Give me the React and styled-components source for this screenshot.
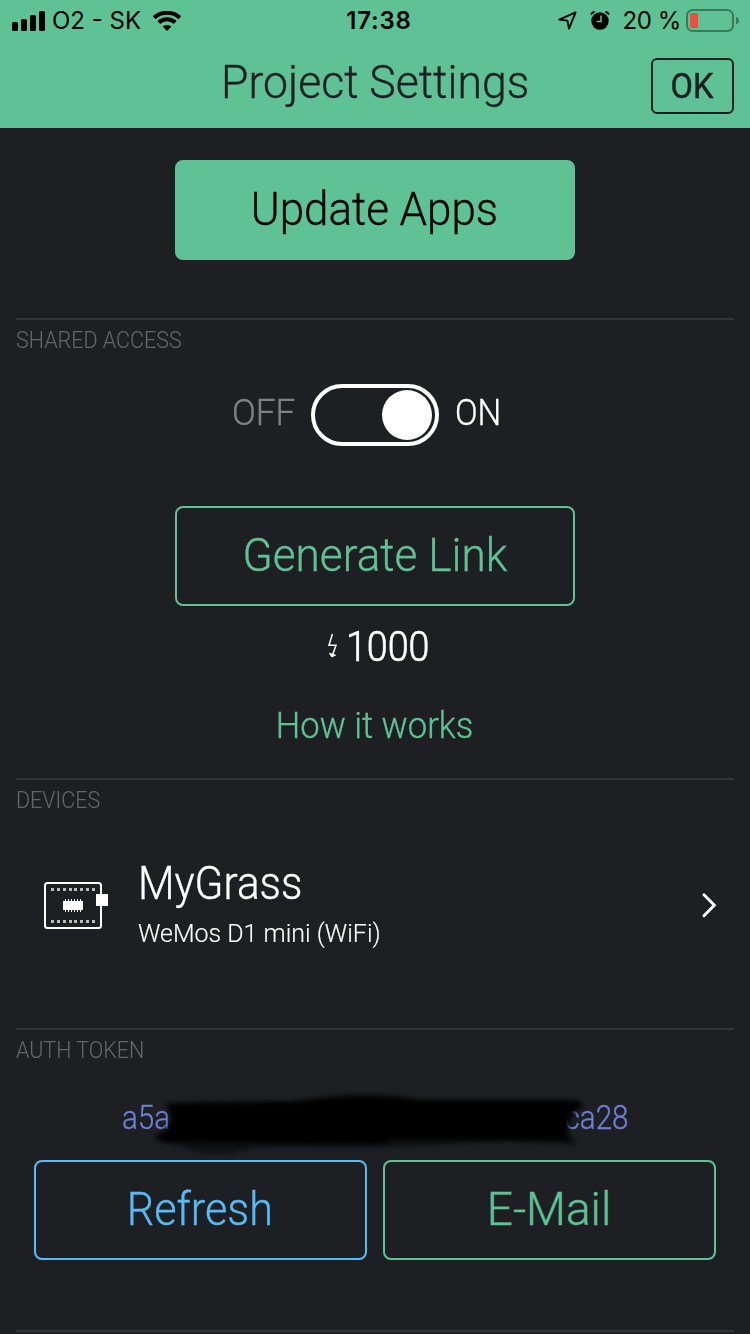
import React from 'react';
import styled, { createGlobalStyle } from 'styled-components';

const green = '#5fc294';
const dark = '#1e1f23';
const blue = '#56bcf6';

const GlobalStyle = createGlobalStyle`
  * { box-sizing: border-box; }
  body { margin: 0; background: ${dark}; }
  button { background: none; padding: 0; cursor: pointer; }
`;

const Screen = styled.div`
  width: 750px;
  height: 1334px;
  overflow: hidden;
  background: ${dark};
  color: #fff;
  font-family: Roboto, "Liberation Sans", sans-serif;
  font-weight: 300;
  display: flex;
  flex-direction: column;
`;

const Label = styled.span`
  display: block;
  white-space: nowrap;
  font-size: ${(p) => p.$size || 46}px;
  line-height: ${(p) => p.$line || 50}px;
  letter-spacing: ${(p) => p.$track || 0}px;
  color: ${(p) => p.$color || 'inherit'};
  transform: scaleX(${(p) => p.$squeeze || 1});
  transform-origin: ${(p) => p.$origin || 'center'};
  -webkit-text-stroke: ${(p) => (p.$stroke === undefined ? 0.35 : p.$stroke)}px currentColor;
`;

const Header = styled.header`
  height: 128px;
  flex: none;
  background: ${green};
  color: ${dark};
`;

const StatusBar = styled.div`
  height: 41px;
  display: grid;
  grid-template-columns: 1fr auto 1fr;
  align-items: center;
  padding: 0 11px 0 12px;
  color: #000;
  font-family: Inter, "Liberation Sans", sans-serif;
  font-weight: 400;
`;

const StatusGroup = styled.div`
  display: flex;
  align-items: center;
  justify-content: ${(p) => (p.$end ? 'flex-end' : 'flex-start')};
  svg { display: block; flex: none; }
`;

const StatusText = styled(Label)`
  font-weight: ${(p) => p.$weight || 400};
  margin: ${(p) => p.$margin || 0};
  -webkit-text-stroke: 0;
`;

const TitleBar = styled.div`
  height: 87px;
  display: grid;
  grid-template-columns: 1fr auto 1fr;
  padding: 0 16px;
  align-items: start;
`;

const Title = styled.h1`
  margin: 16px 0 0;
  font-weight: 300;
`;

const OkButton = styled.button`
  justify-self: end;
  margin-top: 17px;
  width: 83px;
  height: 56px;
  border: 2px solid ${dark};
  border-radius: 6px;
  color: ${dark};
  font: 400 35px Roboto, sans-serif;
  display: flex;
  align-items: center;
  justify-content: center;
  padding-top: 2px;
`;

const Section = styled.section`
  height: ${(p) => p.$height}px;
  flex: none;
  margin: 0 16px;
  border-top: ${(p) => (p.$plain ? '0' : '2px solid #333438')};
  display: flex;
  flex-direction: column;
  align-items: center;
`;

const SectionName = styled(Label)`
  align-self: flex-start;
  margin-top: 8px;
  color: #646568;
  transform: scaleX(0.914);
  transform-origin: left;
`;

const BigButton = styled.button`
  width: ${(p) => p.$width || 400}px;
  height: 100px;
  flex: none;
  margin-top: ${(p) => p.$top || 0}px;
  border: 2px solid ${(p) => p.$tone};
  border-radius: 8px;
  color: ${(p) => (p.$filled ? '#000' : p.$tone)};
  background: ${(p) => (p.$filled ? p.$tone : 'transparent')};
  font: 300 46px Roboto, sans-serif;
  display: flex;
  justify-content: center;
  align-items: flex-start;
  padding: 22px 1px 0 0;
`;

const ToggleRow = styled.div`
  display: flex;
  align-items: center;
  justify-content: flex-start;
  gap: 16px;
  width: 288px;
  margin: 32px 0 0 1px;
`;

const Switch = styled.div`
  width: 128px;
  height: 62px;
  flex: none;
  border: 4px solid #fff;
  border-radius: 31px;
  padding: 2px 3px;
  display: flex;
  justify-content: flex-end;
`;

const Knob = styled.div`
  width: 50px;
  height: 50px;
  border-radius: 50%;
  background: #fff;
`;

const ToggleText = styled(Label)`
  margin-top: -5px;
  width: ${(p) => p.$width}px;
`;

const Price = styled.div`
  display: flex;
  align-items: center;
  gap: 8px;
  margin: 15px 0 0 19px;
`;

const Link = styled.a`
  color: ${green};
  margin-top: 30px;
`;

const DeviceRow = styled.div`
  align-self: stretch;
  display: flex;
  align-items: center;
  margin-top: 46px;
  padding: 0 17px 0 28px;
  svg { margin-bottom: 5px; flex: none; }
`;

const DeviceText = styled.div`
  flex: 1;
  margin-left: 29px;
`;

const Token = styled.div`
  position: relative;
  width: 506px;
  height: 44px;
  margin-top: 34px;
  display: flex;
  justify-content: space-between;
  color: #6b80d6;
`;

const Scribble = styled.svg`
  position: absolute;
  left: 18px;
  top: -8px;
`;

const ButtonRow = styled.div`
  display: flex;
  gap: 16px;
  margin-top: 20px;
`;

const SignalIcon = () => (
  <svg width="34" height="20" viewBox="0 0 34 20">
    <rect x="0" y="11" width="6" height="9" rx="1.6" />
    <rect x="9" y="8" width="6" height="12" rx="1.6" />
    <rect x="18" y="4" width="6" height="16" rx="1.6" />
    <rect x="27" y="0" width="6" height="20" rx="1.6" />
  </svg>
);

const WifiIcon = () => (
  <svg width="28" height="20" viewBox="0 0 28 20">
    <g fill="none" stroke="#000" strokeWidth="4.1">
      <path d="M1.2 6.7 C8 0.1 20 0.1 26.8 6.7" />
      <path d="M5.8 11.4 C10.5 7.1 17.5 7.1 22.2 11.4" />
    </g>
    <path d="M9.6 15.5 C12.1 13.4 15.9 13.4 18.4 15.5 L14 20 Z" />
  </svg>
);

const LocationIcon = () => (
  <svg width="19" height="19" viewBox="0 0 19 19">
    <path d="M17.6 1.3 L1.3 8.6 L9.4 9.6 L11 17.6 Z" fill="none" stroke="#000" strokeWidth="1.9" strokeLinejoin="round" />
  </svg>
);

const AlarmSvg = styled.svg`
  margin-left: 13px;
`;

const AlarmIcon = () => (
  <AlarmSvg width="20" height="19" viewBox="0 0 20 19">
    <circle cx="10" cy="10" r="8.7" />
    <path d="M1 3.6 Q2 1.2 4.6 0.8 M19 3.6 Q18 1.2 15.4 0.8" fill="none" stroke="#000" strokeWidth="1.8" />
    <path d="M11 4.6 V10.6 H6.6" fill="none" stroke={green} strokeWidth="1.5" />
  </AlarmSvg>
);

const BatteryIcon = () => (
  <svg width="53" height="23" viewBox="0 0 53 23">
    <rect x="1" y="1" width="46" height="21" rx="5.5" fill="none" stroke="#3b7a5c" strokeWidth="2" />
    <rect x="4" y="4" width="8" height="15" rx="1.5" fill="#ee4d3f" />
    <path d="M50 8 Q53 9 53 11.8 Q53 14.5 50 15.5 Z" fill="#3b7a5c" />
  </svg>
);

const BoltIcon = () => (
  <svg width="11" height="26" viewBox="0 0 11 26" fill="none" stroke="#fff">
    <path d="M5.4 1 L2 12.3 H9 L5.2 23" strokeWidth="1.5" />
    <path d="M2.4 20.2 L4.7 24 L8.6 22.2 Z" fill="#fff" strokeWidth="0.8" />
  </svg>
);

const BoardIcon = () => {
  const dots = [0, 1, 2, 3, 4, 5, 6, 7];
  const pins = [0, 1, 2, 3, 4, 5];
  const dotX = (i) => Math.round(7 + i * 5.86);
  return (
    <svg width="65" height="48" viewBox="0 0 65 48">
      <rect x="1" y="1" width="56" height="45" rx="2.5" fill="none" stroke="#fff" strokeWidth="2" />
      <rect x="52" y="12" width="12" height="12" fill="#fff" />
      {dots.map((i) => (
        <g key={i} fill="#b9babc">
          <rect x={dotX(i)} y="6" width="3" height="3" />
          <rect x={dotX(i)} y="38" width="3" height="3" />
        </g>
      ))}
      <rect x="19" y="19" width="20" height="9" fill="#fff" />
      {pins.map((i) => (
        <rect key={i} x={21 + i * 3} y="17" width="1" height="13" fill="#fff" />
      ))}
    </svg>
  );
};

const Chevron = () => (
  <svg width="16" height="26" viewBox="0 0 16 26">
    <path d="M3 1.8 L13.3 12.3 L3 22.8" fill="none" stroke="#fff" strokeWidth="2.9" strokeLinecap="round" />
  </svg>
);

const Redaction = () => (
  <Scribble width="460" height="70" viewBox="140 1088 460 70">
    <defs>
      <filter id="soft" x="-5%" y="-25%" width="110%" height="150%" colorInterpolationFilters="sRGB">
        <feGaussianBlur stdDeviation="2.6" />
      </filter>
    </defs>
    <g filter="url(#soft)">
      <path d="M170 1138 L384 1142 L387 1135 L570 1136 L577 1145 L500 1142 L387 1147 L254 1147 Q240 1153 212 1153 Q192 1152 182 1146 L162 1143 Z" fill="#0e0f11" />
      <path d="M166 1103 L296 1101 Q330 1096 366 1095 Q400 1096 422 1100 L574 1100 Q589 1103 580 1108 Q568 1114 568 1136 L574 1140 L390 1139 L383 1144 L176 1142 Q152 1142 156 1135 Q172 1130 171 1117 Z" fill="#000" />
    </g>
  </Scribble>
);

export default function App() {
  return (
    <Screen>
      <GlobalStyle />
      <Header>
        <StatusBar>
          <StatusGroup>
            <SignalIcon />
            <StatusText $size={24} $line={28} $margin="0 12px 0 6px">O2 - SK</StatusText>
            <WifiIcon />
          </StatusGroup>
          <StatusText $size={24} $line={28} $weight={600} $track={0.8} $margin="0 0 0 7px">17:38</StatusText>
          <StatusGroup $end>
            <LocationIcon />
            <AlarmIcon />
            <StatusText $size={24} $line={28} $track={-0.4} $margin="0 5px 0 13px">20 %</StatusText>
            <BatteryIcon />
          </StatusGroup>
        </StatusBar>
        <TitleBar>
          <span />
          <Title><Label $squeeze={0.968}>Project Settings</Label></Title>
          <OkButton><Label $size={35} $squeeze={0.93} $stroke={0.5}>OK</Label></OkButton>
        </TitleBar>
      </Header>

      <Section $height={190} $plain>
        <BigButton $tone={green} $filled $top={32}><Label $squeeze={0.955}>Update Apps</Label></BigButton>
      </Section>

      <Section $height={460}>
        <SectionName $size={23.5} $line={24} $stroke={0.1}>SHARED ACCESS</SectionName>
        <ToggleRow>
          <ToggleText $size={37} $width={63} $squeeze={0.95} $origin="left" $color="#808083">OFF</ToggleText>
          <Switch><Knob /></Switch>
          <ToggleText $size={37} $width={46} $squeeze={0.9} $origin="left">ON</ToggleText>
        </ToggleRow>
        <BigButton $tone={green} $top={60}><Label $squeeze={0.96}>Generate Link</Label></BigButton>
        <Price>
          <BoltIcon />
          <Label $size={43} $squeeze={0.875} $origin="left" $stroke={0.7}>1000</Label>
        </Price>
        <Link><Label $size={37} $squeeze={0.936}>How it works</Label></Link>
      </Section>

      <Section $height={250}>
        <SectionName $size={23.5} $line={24} $stroke={0.1}>DEVICES</SectionName>
        <DeviceRow>
          <BoardIcon />
          <DeviceText>
            <Label $squeeze={0.918} $origin="left">MyGrass</Label>
            <Label $size={26.5} $squeeze={0.942} $origin="left" $stroke={0.15}>WeMos D1 mini (WiFi)</Label>
          </DeviceText>
          <Chevron />
        </DeviceRow>
      </Section>

      <Section $height={302}>
        <SectionName $size={23.5} $line={24} $stroke={0.1}>AUTH TOKEN</SectionName>
        <Token>
          <Label $size={34} $line={42} $squeeze={0.87} $origin="left">a5a</Label>
          <Label $size={34} $line={42} $squeeze={0.87} $origin="right">ca28</Label>
          <Redaction />
        </Token>
        <ButtonRow>
          <BigButton $tone={blue} $width={333}><Label $squeeze={0.938}>Refresh</Label></BigButton>
          <BigButton $tone={green} $width={333}><Label>E-Mail</Label></BigButton>
        </ButtonRow>
      </Section>
      <Section $height={4} />
    </Screen>
  );
}
